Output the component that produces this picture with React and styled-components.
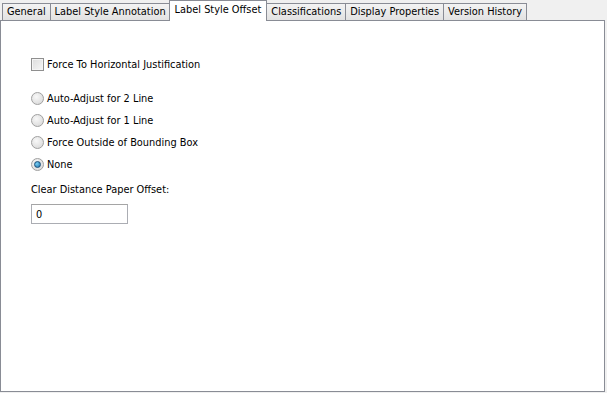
import React from "react";
import styled, { createGlobalStyle } from "styled-components";

const Global = createGlobalStyle`
  html, body { margin: 0; padding: 0; background: #f0f0f0; }
  body { font-family: Tahoma, "DejaVu Sans", sans-serif; font-size: 9.8px; color: #000; }
`;

const Window = styled.div`
  width: 607px;
  height: 393px;
  background: #f0f0f0;
  display: flex;
  flex-direction: column;
  box-sizing: border-box;
  padding: 0 2px 1px 0;
`;

const TabBar = styled.div`
  display: flex;
  align-items: flex-end;
  height: 21px;
  margin-bottom: -1px;
  padding-left: 2px;
  position: relative;
  z-index: 1;
`;

const Tab = styled.div`
  box-sizing: border-box;
  height: ${(p) => (p.$active ? "21px" : "18px")};
  margin-left: ${(p) => (p.$active ? "-1px" : "0")};
  margin-right: ${(p) => (p.$active ? "-1px" : "0")};
  padding: ${(p) => (p.$active ? "2px 5px 0" : "1px 4px 0")};
  border: 1px solid #898c95;
  border-bottom: ${(p) => (p.$active ? "none" : "1px solid #898c95")};
  border-right: ${(p) => (p.$last || p.$active ? "1px solid #898c95" : "none")};
  background: ${(p) => (p.$active ? "#fff" : "linear-gradient(#f3f3f3, #e2e2e2)")};
  white-space: nowrap;
  line-height: 14px;
  position: relative;
  z-index: ${(p) => (p.$active ? 2 : 1)};
`;

const Panel = styled.div`
  flex: 1;
  background: #fff;
  border: 1px solid #898c95;
  padding: 32px 30px 0;
  display: flex;
  flex-direction: column;
  align-items: flex-start;
`;

const Row = styled.label`
  display: flex;
  align-items: center;
  gap: 3px;
  height: 22px;
  margin-bottom: ${(p) => p.$gap || 0}px;
`;

const Check = styled.span`
  width: 11px;
  height: 11px;
  border: 1px solid #8f8f8f;
  background: linear-gradient(135deg, #dcdcdc, #f6f6f6);
  box-shadow: inset 0 0 0 1px #f4f4f4;
  display: inline-block;
`;

const Radio = styled.span`
  width: 11px;
  height: 11px;
  border-radius: 50%;
  border: 1px solid #a0a0a0;
  background: radial-gradient(circle at 40% 35%, #f8f8f8, #d4d4d4);
  display: inline-flex;
  align-items: center;
  justify-content: center;
  &::after {
    content: "";
    display: ${(p) => (p.$on ? "block" : "none")};
    width: 5px;
    height: 5px;
    border-radius: 50%;
    background: radial-gradient(circle at 35% 35%, #7ad0f5, #1c6fa8);
    border: 1px solid #1a4f7a;
  }
`;

const Label = styled.div`
  margin-top: 7px;
  height: 16px;
  line-height: 16px;
`;

const Input = styled.div`
  margin-top: 6px;
  width: 97px;
  height: 20px;
  box-sizing: border-box;
  border: 1px solid #abadb3;
  border-top-color: #a5a5a5;
  padding: 3px 4px;
  line-height: 13px;
`;

const tabs = [
  "General",
  "Label Style Annotation",
  "Label Style Offset",
  "Classifications",
  "Display Properties",
  "Version History",
];

export default function App() {
  return (
    <>
      <Global />
      <Window>
        <TabBar>
          {tabs.map((t, i) => (
            <Tab key={t} $active={i === 2} $last={i === tabs.length - 1}>
              {t}
            </Tab>
          ))}
        </TabBar>
        <Panel>
          <Row $gap={12}>
            <Check />
            Force To Horizontal Justification
          </Row>
          <Row><Radio />Auto-Adjust for 2 Line</Row>
          <Row><Radio />Auto-Adjust for 1 Line</Row>
          <Row><Radio />Force Outside of Bounding Box</Row>
          <Row><Radio $on />None</Row>
          <Label>Clear Distance Paper Offset:</Label>
          <Input>0</Input>
        </Panel>
      </Window>
    </>
  );
}
